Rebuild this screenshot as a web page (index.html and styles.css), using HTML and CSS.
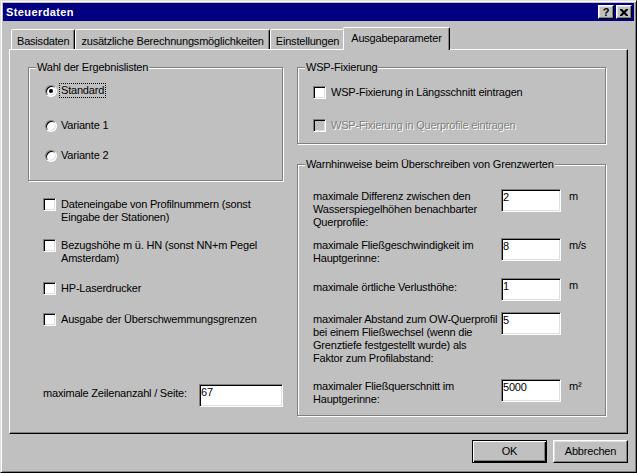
FILE: index.html
```html
<!DOCTYPE html>
<html lang="de">
<head>
<meta charset="utf-8">
<title>Steuerdaten</title>
<link rel="stylesheet" href="styles.css">
</head>
<body>
<div class="window">
  <div class="titlebar">
    <span class="title">Steuerdaten</span>
    <div class="caption-buttons">
      <span class="cap-btn">?</span>
      <span class="cap-btn"><svg width="8" height="7" viewBox="0 0 8 7"><path d="M0 0h2l2 2 2-2h2v1L5.5 3.5 8 6v1H6L4 5 2 7H0V6l2.5-2.5L0 1z" fill="#000"/></svg></span>
    </div>
  </div>
  <div class="client">
    <div class="tabs">
      <div class="tab">Basisdaten</div>
      <div class="tab">zusätzliche Berechnungsmöglichkeiten</div>
      <div class="tab">Einstellungen</div>
      <div class="tab active">Ausgabeparameter</div>
    </div>
    <div class="panel">
      <div class="col">
        <fieldset class="group lists">
          <legend>Wahl der Ergebnislisten</legend>
          <div class="opt-row"><span class="radio checked"></span><span class="opt-label focus">Standard</span></div>
          <div class="opt-row second"><span class="radio"></span><span class="opt-label">Variante 1</span></div>
          <div class="opt-row third"><span class="radio"></span><span class="opt-label">Variante 2</span></div>
        </fieldset>
        <div class="checks">
          <div class="check-row"><span class="checkbox"></span><span class="check-label">Dateneingabe von Profilnummern (sonst<br>Eingabe der Stationen)</span></div>
          <div class="check-row c2"><span class="checkbox"></span><span class="check-label">Bezugshöhe m ü. HN (sonst NN+m Pegel<br>Amsterdam)</span></div>
          <div class="check-row c3"><span class="checkbox"></span><span class="check-label">HP-Laserdrucker</span></div>
          <div class="check-row c4"><span class="checkbox"></span><span class="check-label">Ausgabe der Überschwemmungsgrenzen</span></div>
        </div>
        <div class="lines-row">
          <span class="lines-label">maximale Zeilenanzahl / Seite:</span>
          <span class="input lines-input">67</span>
        </div>
      </div>
      <div class="col">
        <fieldset class="group wsp">
          <legend>WSP-Fixierung</legend>
          <div class="check-row"><span class="checkbox"></span><span class="check-label">WSP-Fixierung in Längsschnitt eintragen</span></div>
          <div class="check-row wsp2"><span class="checkbox disabled"></span><span class="check-label disabled-text">WSP-Fixierung in Querprofile eintragen</span></div>
        </fieldset>
        <fieldset class="group warn">
          <legend>Warnhinweise beim Überschreiben von Grenzwerten</legend>
          <div class="warn-row">
            <span class="warn-label">maximale Differenz zwischen den<br>Wasserspiegelhöhen benachbarter<br>Querprofile:</span>
            <span class="input warn-input">2</span>
            <span class="unit">m</span>
          </div>
          <div class="warn-row w2">
            <span class="warn-label">maximale Fließgeschwindigkeit im<br>Hauptgerinne:</span>
            <span class="input warn-input">8</span>
            <span class="unit">m/s</span>
          </div>
          <div class="warn-row w3">
            <span class="warn-label single">maximale örtliche Verlusthöhe:</span>
            <span class="input warn-input">1</span>
            <span class="unit">m</span>
          </div>
          <div class="warn-row w4">
            <span class="warn-label">maximaler Abstand zum OW-Querprofil<br>bei einem Fließwechsel (wenn die<br>Grenztiefe festgestellt wurde) als<br>Faktor zum Profilabstand:</span>
            <span class="input warn-input">5</span>
          </div>
          <div class="warn-row w5">
            <span class="warn-label">maximaler Fließquerschnitt im<br>Hauptgerinne:</span>
            <span class="input warn-input">5000</span>
            <span class="unit">m²</span>
          </div>
        </fieldset>
      </div>
    </div>
    <div class="buttons">
      <button class="btn default" type="button">OK</button>
      <button class="btn" type="button">Abbrechen</button>
    </div>
  </div>
</div>
</body>
</html>
```

FILE: styles.css
```css
* { box-sizing: border-box; }
html, body { margin: 0; padding: 0; background: #c0c0c0; }
body {
  font-family: "Liberation Sans", Arial, sans-serif;
  font-size: 11px;
  line-height: 13px;
  letter-spacing: -0.2px;
  color: #000;
}
.window {
  width: 637px;
  height: 473px;
  border: 1px solid;
  border-color: #dfdfdf #000 #000 #dfdfdf;
  box-shadow: inset 1px 1px #fff, inset -1px -1px #808080;
  padding: 2px;
  background: #c0c0c0;
  display: flex;
  flex-direction: column;
}
.titlebar {
  height: 18px;
  flex: none;
  background: #000080;
  color: #fff;
  display: flex;
  align-items: center;
  justify-content: space-between;
  padding: 0 2px 0 3px;
}
.title { font-weight: bold; letter-spacing: 0.4px; }
.caption-buttons { display: flex; gap: 2px; }
.cap-btn {
  width: 16px;
  height: 14px;
  background: #c0c0c0;
  border: 1px solid;
  border-color: #fff #000 #000 #fff;
  box-shadow: inset -1px -1px #808080, inset 1px 1px #dfdfdf;
  display: flex;
  align-items: center;
  justify-content: center;
  color: #000;
  font-weight: bold;
  font-size: 11px;
  letter-spacing: 0;
}
.client {
  flex: 1;
  padding: 6px 6px 7px 6px;
  display: flex;
  flex-direction: column;
}
.tabs {
  height: 22px;
  flex: none;
  display: flex;
  align-items: flex-end;
  padding-left: 2px;
}
.tab {
  height: 20px;
  padding: 5px 5px 0 5px;
  border: 1px solid;
  border-bottom: none;
  border-color: #fff #000 transparent #fff;
  border-radius: 2px 2px 0 0;
  box-shadow: inset -1px 0 #808080;
  background: #c0c0c0;
  white-space: nowrap;
}
.tab.active {
  height: 23px;
  padding-top: 4px;
  margin: 0 -2px -1px -2px;
  position: relative;
  z-index: 1;
  padding-left: 7px;
  padding-right: 7px;
}
.panel {
  height: 385px;
  flex: none;
  border: 1px solid;
  border-color: #fff #000 #000 #fff;
  box-shadow: inset -1px -1px #808080;
  display: grid;
  grid-template-columns: 255px 309px;
  column-gap: 14px;
  align-items: start;
  padding: 11px 0 0 18px;
}
.col { display: flex; flex-direction: column; }
.group {
  margin: 0;
  min-width: 0;
  border: 1px solid #808080;
  box-shadow: inset 1px 1px #fff, 1px 1px #fff;
}
.group legend {
  padding: 0 1px;
  margin-left: 7px;
  line-height: 13px;
  background: #c0c0c0;
}
.lists { padding: 10px 0 18px 0; }
.lists .opt-row { margin-left: 16px; }
.opt-row { display: flex; align-items: center; height: 13px; gap: 3px; }
.opt-row.second { margin-top: 22px; }
.opt-row.third { margin-top: 17px; }
.opt-label { padding: 0 1px; }
.opt-label.focus { outline: 1px dotted #000; }
.radio {
  width: 12px;
  height: 12px;
  flex: none;
  border-radius: 50%;
  background: #fff;
  border: 1px solid;
  border-color: #808080 #fff #fff #808080;
  box-shadow: inset 1px 1px #000, inset -1px -1px #dfdfdf;
  display: flex;
  align-items: center;
  justify-content: center;
}
.radio.checked::after {
  content: "";
  width: 4px;
  height: 4px;
  border-radius: 50%;
  background: #000;
}
.checks { margin-top: 17px; padding-left: 15px; display: flex; flex-direction: column; }
.check-row { display: flex; align-items: flex-start; gap: 5px; }
.c2 { margin-top: 15px; }
.c3 { margin-top: 17px; }
.c4 { margin-top: 18px; }
.checkbox {
  width: 13px;
  height: 13px;
  flex: none;
  background: #fff;
  border: 1px solid;
  border-color: #808080 #fff #fff #808080;
  box-shadow: inset 1px 1px #000, inset -1px -1px #dfdfdf;
}
.checkbox.disabled { background: #c0c0c0; }
.check-label { white-space: nowrap; }
.disabled-text { color: #808080; text-shadow: 1px 1px 0 #fff; }
.input {
  display: block;
  flex: none;
  height: 23px;
  background: #fff;
  border: 1px solid;
  border-color: #808080 #fff #fff #808080;
  box-shadow: inset 1px 1px #000, inset -1px -1px #dfdfdf;
  padding: 1px 1px 0 1px;
}
.lines-row { margin-top: 58px; padding-left: 15px; display: flex; align-items: flex-start; }
.lines-label { width: 158px; padding-top: 3px; white-space: nowrap; }
.lines-input { width: 84px; }
.wsp { padding: 12px 0 11px 0; }
.wsp .check-row { margin-left: 15px; }
.wsp .wsp2 { margin-top: 20px; }
.warn { margin-top: 14px; padding: 18px 0 9px 0; }
.warn-row { display: flex; align-items: flex-start; margin-left: 15px; }
.w2 { margin-top: 9px; }
.w3 { margin-top: 13px; }
.w4 { margin-top: 11px; }
.w5 { margin-top: 14px; }
.warn-label { width: 188px; padding-top: 1px; white-space: nowrap; }
.warn-label.single { padding-top: 3px; }
.warn-input { width: 60px; }
.unit { margin-left: 8px; padding-top: 1px; }
.buttons {
  margin-top: 6px;
  display: flex;
  justify-content: flex-end;
  gap: 6px;
}
.btn {
  width: 75px;
  height: 23px;
  margin: 0;
  padding: 0;
  font: inherit;
  letter-spacing: inherit;
  color: #000;
  background: #c0c0c0;
  border: 1px solid;
  border-color: #fff #000 #000 #fff;
  box-shadow: inset -1px -1px #808080, inset 1px 1px #dfdfdf;
}
.btn.default {
  border-color: #000;
  box-shadow: inset 1px 1px #fff, inset -1px -1px #000, inset -2px -2px #808080;
}
```
